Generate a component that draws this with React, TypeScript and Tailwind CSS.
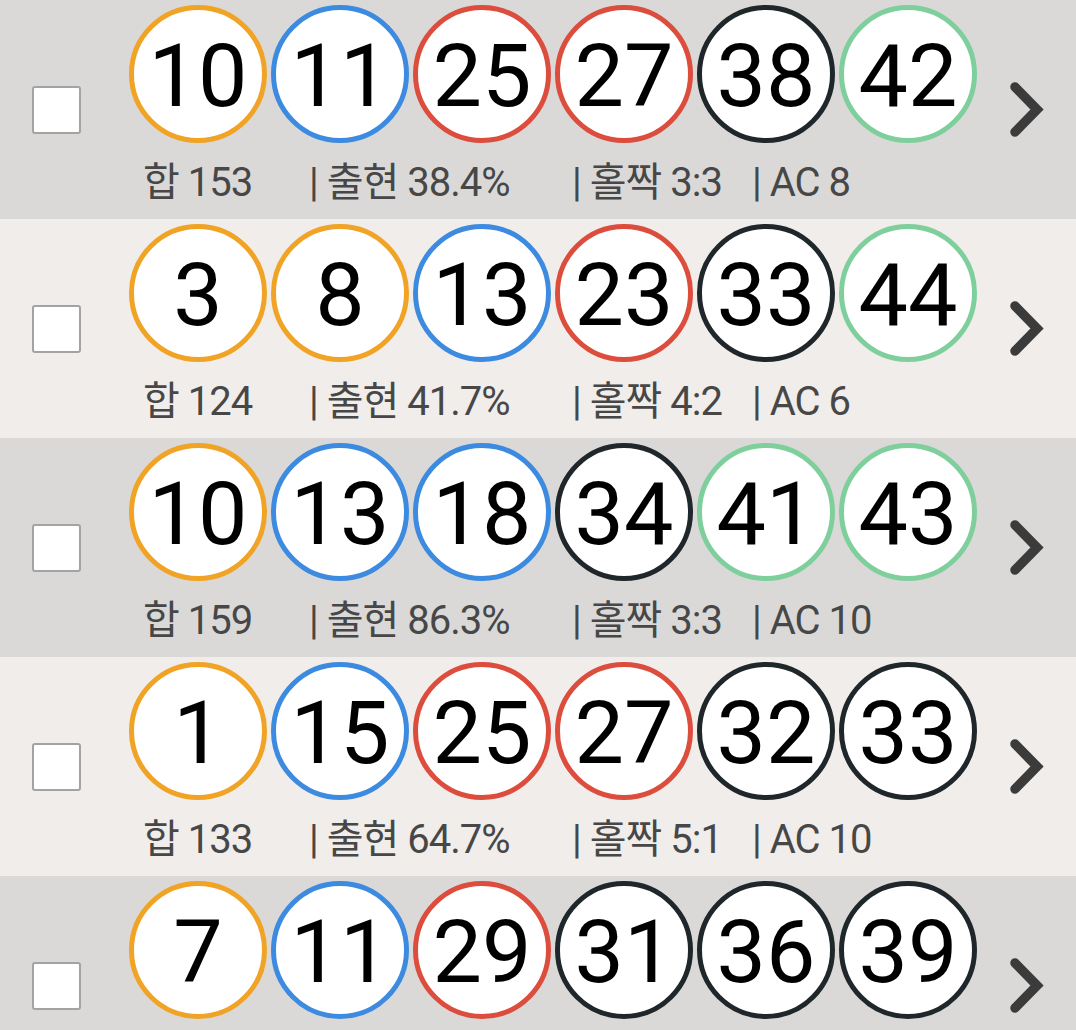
import React from 'react';

type Pick = {
    nums: number[];
    sum: number;
    hit: string;
    oddEven: string;
    ac: number;
};

const picks: Pick[] = [
    { nums: [10, 11, 25, 27, 38, 42], sum: 153, hit: '38.4%', oddEven: '3:3', ac: 8 },
    { nums: [3, 8, 13, 23, 33, 44], sum: 124, hit: '41.7%', oddEven: '4:2', ac: 6 },
    { nums: [10, 13, 18, 34, 41, 43], sum: 159, hit: '86.3%', oddEven: '3:3', ac: 10 },
    { nums: [1, 15, 25, 27, 32, 33], sum: 133, hit: '64.7%', oddEven: '5:1', ac: 10 },
    { nums: [7, 11, 29, 31, 36, 39], sum: 153, hit: '52.1%', oddEven: '4:2', ac: 9 },
];

const ringClass = (n: number) => {
    if (n <= 10) return 'border-[#f0a325]';
    if (n <= 20) return 'border-[#3d8be0]';
    if (n <= 30) return 'border-[#dc4d3d]';
    if (n <= 40) return 'border-[#1f272b]';
    return 'border-[#7fcf9d]';
};

function Ball({ n }: { n: number }) {
    return (
        <div
            className={`w-[138px] h-[138px] shrink-0 rounded-full border-[5px] bg-white flex items-center justify-center pt-[4px] text-[88px] leading-none text-black ${ringClass(n)}`}
        >
            {n}
        </div>
    );
}

function Chevron() {
    return (
        <svg width="40" height="60" viewBox="0 0 40 60" className="ml-auto mr-[28px] shrink-0">
            <path d="M7 7 L29 29.5 L7 52" fill="none" stroke="#3b3b3b" strokeWidth="9.5" strokeLinejoin="miter" strokeLinecap="round" />
        </svg>
    );
}

export default function App() {
    return (
        <div className="w-[1076px] font-['Roboto','Noto_Sans_CJK_KR',sans-serif]">
            {picks.map((p, i) => (
                <div
                    key={i}
                    className={`flex items-center h-[219px] ${i % 2 === 0 ? 'bg-[#dad9d8]' : 'bg-[#f0edea]'}`}
                >
                    {/* checkbox */}
                    <div className="w-[129px] shrink-0 pl-[32px]">
                        <div className="w-[49px] h-[48px] rounded-[3px] border-2 border-[#a3a3a3] bg-white" />
                    </div>

                    <div className="self-start pt-[5px]">
                        <div className="flex gap-[4px]">
                            {p.nums.map((n) => (
                                <Ball key={n} n={n} />
                            ))}
                        </div>
                        <div className="flex mt-[20px] text-[40px] leading-[40px] tracking-[-1px] text-[#474747] whitespace-nowrap">
                            <span className="w-[180px] pl-[14px]">합 {p.sum}</span>
                            <span className="w-[263px]">| 출현 {p.hit}</span>
                            <span className="w-[180px]">| 홀짝 {p.oddEven}</span>
                            <span>| AC {p.ac}</span>
                        </div>
                    </div>

                    <Chevron />
                </div>
            ))}
        </div>
    );
}
